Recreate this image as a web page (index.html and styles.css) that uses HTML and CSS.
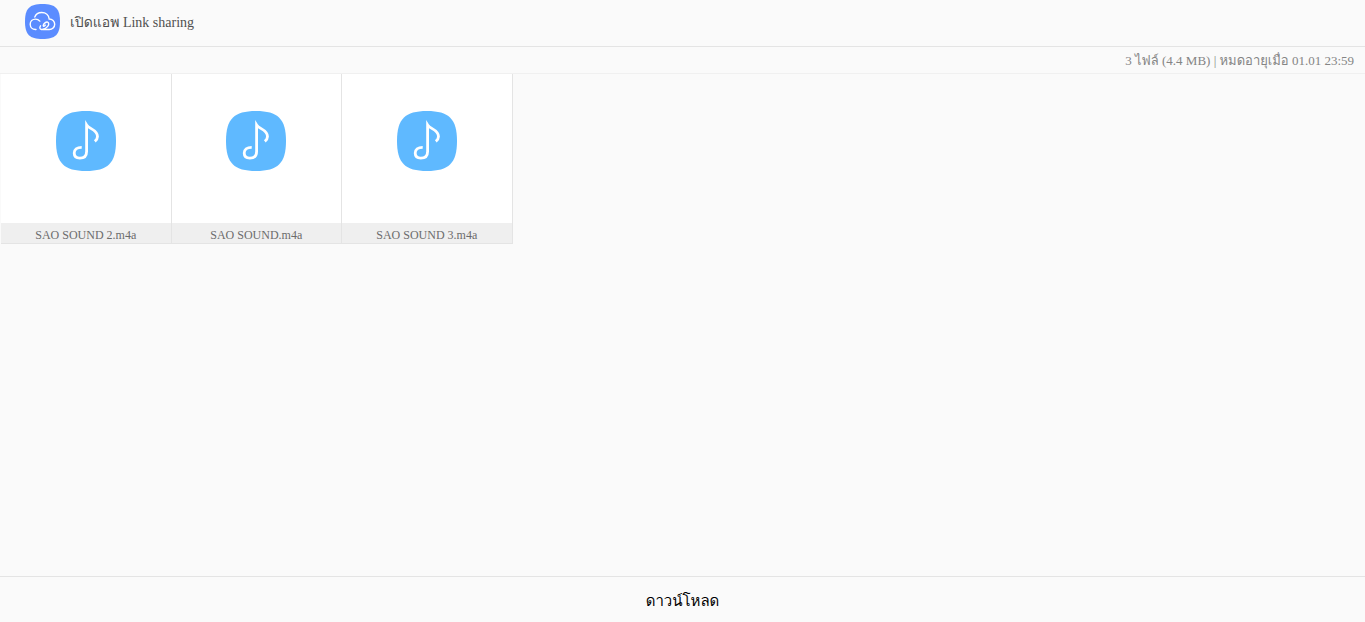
FILE: index.html
```html
<!DOCTYPE html>
<html lang="th">
<head>
	<meta charset="utf-8">
	<meta name="viewport" content="width=device-width, initial-scale=1">
	<title>Link sharing</title>
	<link rel="stylesheet" href="styles.css">
</head>
<body>
	<svg class="symbols" aria-hidden="true">
		<symbol id="music" viewBox="0 0 60 60">
			<path fill="#5fb9ff" d="M30 0C52 0 60 8 60 30S52 60 30 60 0 52 0 30 8 0 30 0Z"/>
			<path fill="none" stroke="#fff" stroke-width="2.8" d="M25.7 36.3C21 36.3 18.2 38.8 18.2 42.1C18.2 45.4 20.5 47.2 23.8 47.2C27.8 47.2 30.6 45 30.6 40.5V14C33 18 41.5 18.5 41.5 25.5C41.5 27.500 40.5 29 38.8 30.3"/>
		</symbol>
	</svg>
	<header class="header">
		<a class="app-link" href="#">
			<svg class="app-icon" viewBox="0 0 35 35" aria-hidden="true">
				<path fill="#5b8cff" d="M17.5 0C30.5 0 35 4.5 35 17.5S30.5 35 17.5 35 0 30.5 0 17.5 4.5 0 17.5 0Z"/>
				<g fill="none" stroke="#fff" stroke-width="1.4" stroke-linecap="round">
					<path d="M11 25.5H10.5C7.5 25.5 5.2 23.2 5.2 20.3C5.2 17.4 7.5 15.1 10.5 15.1C12.3 15.1 13.8 15.9 14.8 17.1"/>
					<path d="M9.8 13C10.8 10.3 13.5 8.5 16.7 8.5C20.8 8.5 23.8 11.2 24.2 15C27.3 15 29.7 17.3 29.7 20.2C29.7 23.2 27.3 25.5 24.3 25.5H18"/>
					<path d="M20.3 21.2C19.3 22.9 18 22.5 18.3 21.1C18.7 19.6 21 17.6 22.6 18.1C24.2 18.7 23.9 20.9 22.7 22.4C21 24.5 18.5 25.8 16.5 25.5C14.6 25.2 14.4 23.3 15.5 21.8"/>
				</g>
			</svg>
			<span>เปิดแอพ Link sharing</span>
		</a>
	</header>
	<div class="info">3 ไฟล์ (4.4 MB) | หมดอายุเมื่อ 01.01 23:59</div>
	<main class="content">
		<ul class="files">
			<li>
				<a href="#">
					<span class="thumb"><svg aria-hidden="true"><use href="#music"/></svg></span>
					<span class="name">SAO SOUND 2.m4a</span>
				</a>
			</li>
			<li>
				<a href="#">
					<span class="thumb"><svg aria-hidden="true"><use href="#music"/></svg></span>
					<span class="name">SAO SOUND.m4a</span>
				</a>
			</li>
			<li>
				<a href="#">
					<span class="thumb"><svg aria-hidden="true"><use href="#music"/></svg></span>
					<span class="name">SAO SOUND 3.m4a</span>
				</a>
			</li>
		</ul>
	</main>
	<button class="download" type="button">ดาวน์โหลด</button>
</body>
</html>
```
FILE: styles.css
```css
*{
	box-sizing: border-box;
}
body{
	display: flex;
	flex-direction: column;
	min-height: 100vh;
	margin: 0;
	background-color: #fafafa;
	font-family: "Liberation Serif", "Loma", "Garuda", "Noto Serif Thai", "DejaVu Sans", serif;
}
a{
	color: inherit;
	text-decoration: none;
}
.symbols{
	display: none;
}
.header{
	display: flex;
	padding: 4px 25px 7px;
	border-bottom: 1px solid #e4e4e4;
}
.app-link{
	display: flex;
	align-items: center;
	gap: 10px;
	color: #505050;
	font-size: 14px;
}
.app-icon{
	width: 35px;
	height: 35px;
}
.info{
	height: 27px;
	padding: 0 11px;
	border-bottom: 1px solid #f0f0f0;
	color: #858585;
	font-size: 13px;
	line-height: 28px;
	text-align: right;
}
.content{
	flex: 1;
}
.files{
	display: grid;
	grid-template-columns: repeat(8, 1fr);
	margin: 0;
	padding: 0 0 0 1px;
	list-style: none;
}
.files li{
	border-right: 1px solid #e4e4e4;
	border-bottom: 1px solid #e4e4e4;
	background-color: #fff;
}
.files a{
	display: block;
}
.thumb{
	display: flex;
	align-items: center;
	justify-content: center;
	height: 149px;
	padding-bottom: 16px;
}
.thumb svg{
	width: 60px;
	height: 60px;
}
.name{
	display: block;
	height: 20px;
	overflow: hidden;
	background-color: #efefef;
	color: #6c6c6c;
	font-size: 12px;
	line-height: 24px;
	text-align: center;
	text-overflow: ellipsis;
	white-space: nowrap;
}
.download{
	width: 100%;
	height: 46px;
	padding: 2px 0 0;
	border: none;
	border-top: 1px solid #e4e4e4;
	background-color: #fafafa;
	color: #000;
	font-family: inherit;
	font-size: 15px;
	cursor: pointer;
}
```
